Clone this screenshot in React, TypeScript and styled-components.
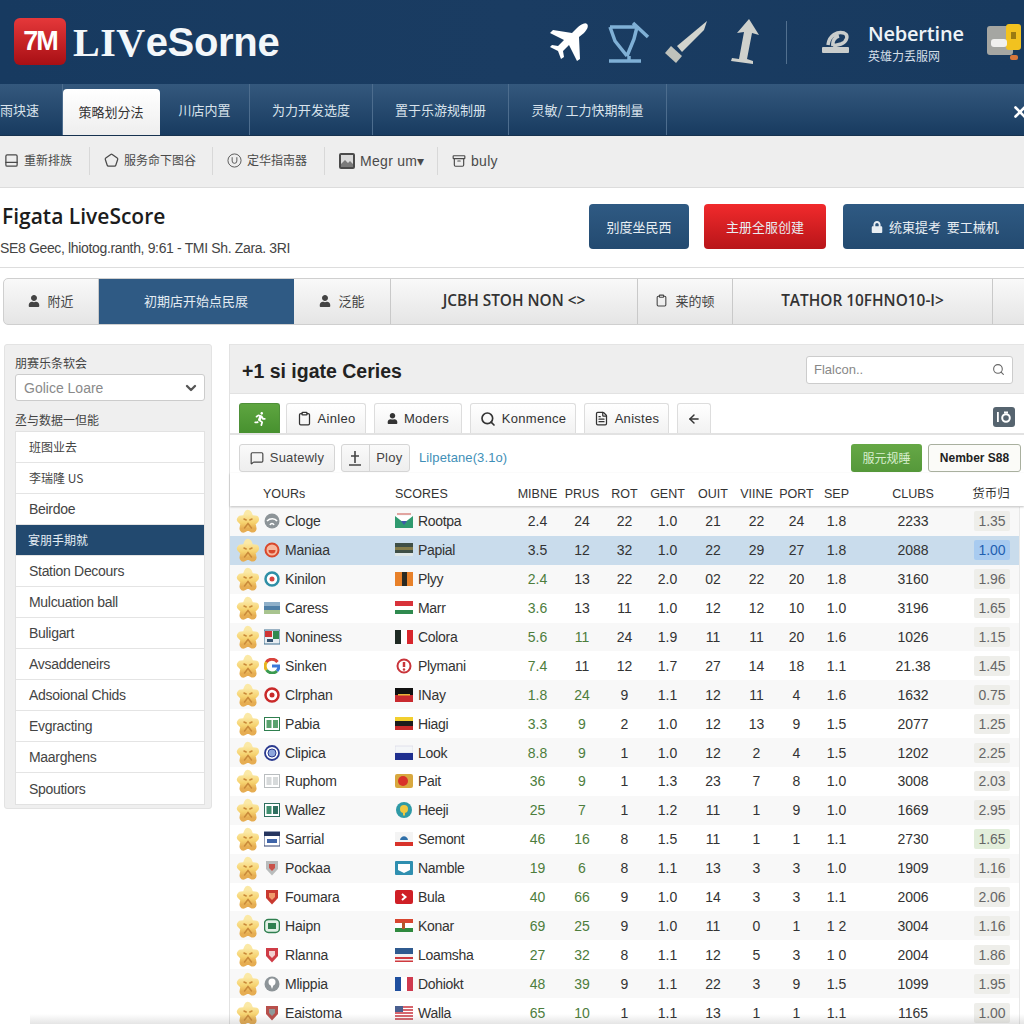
import styled, { createGlobalStyle } from 'styled-components';
import { Archive, ArrowLeft, ChevronDown, Clipboard, FileText, MessageSquare, PanelBottom, Pentagon, Search, X } from 'lucide-react';
import { FaLock, FaRunning, FaUser } from 'react-icons/fa';

const SANS = '"Liberation Sans", Arial, "Noto Sans CJK SC", sans-serif';
const OPEN = '"Open Sans", "Noto Sans", "Noto Sans CJK SC", sans-serif';

const GlobalStyle = createGlobalStyle`
  html, body {
    margin: 0;
    height: 1024px;
    overflow: hidden;
    background: #fff;
    font-family: ${SANS};
  }
  * { box-sizing: border-box; }
`;

const Page = styled.div`
  width: 1024px;
  height: 1024px;
  overflow: hidden;
  position: relative;
`;

const BottomFade = styled.div`
  position: absolute;
  left: 30px;
  right: 0;
  bottom: 0;
  height: 10px;
  background: linear-gradient(rgba(90, 90, 90, 0), rgba(90, 90, 90, 0.16));
  pointer-events: none;
`;

/* top bar */
const TopBar = styled.header`
  height: 84px;
  display: flex;
  align-items: center;
  padding-left: 14px;
  background: linear-gradient(90deg, #173a60, #1a3c62 50%, #183a5f);
`;

const LogoBadge = styled.div`
  width: 52px;
  height: 47px;
  margin-top: -1px;
  border-radius: 6px;
  background: linear-gradient(#e5383a, #a80f14);
  color: #fff;
  font: bold 27px/47px ${SANS};
  letter-spacing: -2px;
  text-align: center;
`;

const LogoText = styled.div`
  margin-left: 7px;
  color: #f3f7fa;
  font: bold 40px/47px ${SANS};
  letter-spacing: -0.3px;
  white-space: nowrap;
`;

const LogoSerif = styled.span`
  font-family: "Liberation Serif", serif;
  letter-spacing: 0.5px;
`;

const TopIcons = styled.div`
  margin-left: auto;
  display: flex;
  align-items: center;
  height: 100%;
`;

const TopIcon = styled.svg<{ $gap?: number }>`
  flex: none;
  margin-left: ${({ $gap }) => $gap || 0}px;
`;

const TopDivider = styled.div`
  width: 1px;
  height: 43px;
  margin: 0 35px 0 26px;
  background: #52708f;
`;

const UserBlock = styled.div`
  margin: 0 21px 0 19px;
  width: 97px;
`;

const UserName = styled.div`
  color: #eef3f7;
  font: 600 20px/26px ${OPEN};
  letter-spacing: -0.2px;
`;

const UserSub = styled.div`
  color: #d5dfe8;
  font: 12px/17px "Noto Sans CJK SC", sans-serif;
`;

const BoxIcon = styled.svg`
  flex: none;
  margin-right: 3px;
`;

/* main navigation */
const NavBar = styled.nav`
  height: 52px;
  display: flex;
  align-items: flex-end;
  background: linear-gradient(#34587d, #183b60);
  border-bottom: 1px solid #16324f;
`;

const NavItem = styled.div<{ $width: number; $active?: boolean; $start?: boolean }>`
  width: ${({ $width }) => $width}px;
  height: ${({ $active }) => ($active ? '46px' : '51px')};
  display: flex;
  align-items: center;
  justify-content: ${({ $start }) => ($start ? 'flex-start' : 'center')};
  border-right: 1px solid ${({ $active }) => ($active ? 'transparent' : '#4d6d8e')};
  border-radius: ${({ $active }) => ($active ? '4px 4px 0 0' : '0')};
  background: ${({ $active }) => ($active ? 'linear-gradient(#fff, #eee)' : 'none')};
  color: ${({ $active }) => ($active ? '#333' : '#d9e3ec')};
  font: 13px/20px "Noto Sans CJK SC", sans-serif;
  white-space: nowrap;
`;

const NavClose = styled.div`
  margin: 0 -5px 14px auto;
  color: #fff;
  display: flex;
`;

/* secondary toolbar */
const SubBar = styled.div`
  height: 52px;
  display: flex;
  align-items: center;
  padding-bottom: 2px;
  background: #eee;
  border-bottom: 1px solid #dcdcdc;
`;

const SubItem = styled.div<{ $width: number }>`
  width: ${({ $width }) => $width}px;
  height: 28px;
  display: flex;
  align-items: center;
  gap: 5px;
  padding-left: 14px;
  border-right: 1px solid #d8d8d8;
  color: #4a4a4a;
  font: 12px/16px ${SANS}, "Noto Sans CJK SC";
  white-space: nowrap;

  &:first-child { padding-left: 4px; }
  &:last-child { border-right: 0; }
`;

const SubLatin = styled.span`
  font-size: 14px;
  letter-spacing: 0.3px;
`;

/* page title */
const TitleRow = styled.section`
  height: 80px;
  display: flex;
  align-items: flex-start;
  border-bottom: 1px solid #ddd;
`;

const TitleBlock = styled.div`
  padding: 14px 0 0 2px;
`;

const PageTitle = styled.h1`
  margin: 0;
  color: #1c1c1c;
  font: 600 21px/28px ${OPEN};
`;

const PageSub = styled.div`
  margin: 8px 0 0 -2px;
  color: #444;
  font: 14px/20px ${SANS};
  letter-spacing: -0.35px;
`;

const TitleActions = styled.div`
  margin-left: auto;
  display: flex;
  gap: 15px;
  padding-top: 16px;
`;

const ActionButton = styled.div<{ $width: number; $red?: boolean; $flush?: boolean }>`
  width: ${({ $width }) => $width}px;
  height: 45px;
  display: flex;
  align-items: center;
  justify-content: ${({ $flush }) => ($flush ? 'flex-start' : 'center')};
  gap: 6px;
  padding-left: ${({ $flush }) => ($flush ? '28px' : '0')};
  margin-left: ${({ $flush }) => ($flush ? '2px' : '0')};
  margin-right: ${({ $flush }) => ($flush ? '-10px' : '0')};
  border-radius: 4px;
  background: ${({ $red }) => ($red ? 'linear-gradient(#f12a2c, #b81519)' : 'linear-gradient(#2f5a83, #234a70)')};
  color: #e8eef3;
  font: 13px/18px "Noto Sans CJK SC", sans-serif;
  white-space: nowrap;
`;

/* wide tab strip */
const TabStrip = styled.div`
  display: flex;
  height: 47px;
  margin: 10px -6px 0 3px;
  border: 1px solid #cfcfcf;
  border-radius: 5px;
  overflow: hidden;
  background: linear-gradient(#f9f9f9, #e5e5e5);
`;

const StripCell = styled.div<{ $width: number; $active?: boolean }>`
  width: ${({ $width }) => $width}px;
  display: flex;
  align-items: center;
  justify-content: center;
  gap: 7px;
  padding-bottom: 2px;
  border-right: 1px solid ${({ $active }) => ($active ? 'transparent' : '#c9c9c9')};
  background: ${({ $active }) => ($active ? '#2f5a84' : 'none')};
  color: ${({ $active }) => ($active ? '#e4ecf3' : '#444')};
  font: 13px/18px "Noto Sans CJK SC", sans-serif;
  white-space: nowrap;
`;

const StripLatin = styled.span`
  color: #333;
  font: 600 15.4px/18px ${OPEN};
`;

/* content area */
const Content = styled.div`
  display: flex;
  align-items: flex-start;
  gap: 17px;
  padding: 19px 0 0 4px;
`;

const Sidebar = styled.aside`
  width: 208px;
  height: 465px;
  flex: none;
  padding: 9px 6px 0 10px;
  background: #efefef;
  border: 1px solid #e3e3e3;
  border-radius: 3px;
`;

const SideLabel = styled.div`
  height: 20px;
  color: #444;
  font: 12px/17px "Noto Sans CJK SC", sans-serif;
`;

const SelectBox = styled.div`
  height: 27px;
  display: flex;
  align-items: center;
  justify-content: space-between;
  margin-bottom: 10px;
  padding: 0 5px 0 8px;
  background: #fff;
  border: 1px solid #ccc;
  border-radius: 3px;
  color: #8a8a8a;
  font: 14px/20px ${SANS};
`;

const SideList = styled.ul`
  list-style: none;
  margin: 0;
  padding: 0;
  background: #fff;
  border: 1px solid #e2e2e2;
`;

const SideItem = styled.li<{ $active?: boolean }>`
  height: 31px;
  display: flex;
  align-items: center;
  padding-left: ${({ $active }) => ($active ? '12px' : '13px')};
  border-bottom: 1px solid #e4e4e4;
  background: ${({ $active }) => ($active ? '#22496f' : 'none')};
  color: ${({ $active }) => ($active ? '#e4ecf3' : '#444')};
  font: 14px/20px ${SANS}, "Noto Sans CJK SC";
  letter-spacing: -0.3px;
  white-space: nowrap;

  &:last-child { border-bottom: 0; }
`;

const SideCjk = styled.span`
  font: 12px/20px "Noto Sans CJK SC", sans-serif;
  letter-spacing: 0;
`;

const Panel = styled.main`
  flex: 1;
  min-width: 0;
  border-left: 1px solid #e2e2e2;
`;

const PanelHead = styled.div`
  height: 50px;
  display: flex;
  align-items: center;
  justify-content: space-between;
  padding: 0 11px 0 12px;
  background: #eee;
  border-top: 1px solid #e4e4e4;
  border-bottom: 1px solid #e2e2e2;
`;

const PanelTitle = styled.h2`
  margin: 3px 0 0;
  color: #222;
  font: bold 19.5px/28px ${SANS};
`;

const SearchBox = styled.div`
  width: 207px;
  height: 28px;
  display: flex;
  align-items: center;
  justify-content: space-between;
  margin-top: 1px;
  padding: 0 7px;
  background: #fff;
  border: 1px solid #ccc;
  border-radius: 3px;
  color: #888;
  font: 13px/18px ${SANS};
`;

const TabRow = styled.div`
  height: 41px;
  display: flex;
  align-items: flex-end;
  gap: 8px;
  padding-left: 9px;
  border-bottom: 2px solid #e2e2e2;
`;

const SmallTab = styled.div<{ $width: number; $green?: boolean; $pull?: boolean }>`
  width: ${({ $width }) => $width}px;
  height: 30px;
  display: flex;
  align-items: center;
  justify-content: center;
  gap: 6px;
  margin-left: ${({ $pull }) => ($pull ? '-2px' : '0')};
  border: 1px solid ${({ $green }) => ($green ? '#4e9038' : '#ddd')};
  border-bottom: 0;
  border-radius: 3px 3px 0 0;
  background: ${({ $green }) => ($green ? 'linear-gradient(#5ea540, #47912f)' : 'linear-gradient(#fff, #f2f2f2)')};
  color: ${({ $green }) => ($green ? '#fff' : '#333')};
  font: 13px/18px ${SANS};
  letter-spacing: 0.3px;
`;

const CameraButton = styled.div`
  width: 22px;
  height: 20px;
  margin: 0 9px 6px auto;
  border-radius: 3px;
  background: #56646f;
  display: flex;
  align-items: center;
  justify-content: center;
`;

const ToolRow = styled.div`
  height: 38px;
  display: flex;
  align-items: flex-end;
  gap: 6px;
  padding: 0 3px 1px 9px;
`;

const ToolButton = styled.div<{ $width: number; $joined?: boolean }>`
  width: ${({ $width }) => $width}px;
  height: 28px;
  display: flex;
  align-items: center;
  justify-content: center;
  gap: ${({ $joined }) => ($joined ? '0' : '6px')};
  background: linear-gradient(#fafafa, #eee);
  border: 1px solid #d5d5d5;
  border-radius: 3px;
  color: #444;
  font: 13px/18px ${SANS};
  letter-spacing: 0.2px;
`;

const ToolPart = styled.div<{ $width: number; $split?: boolean }>`
  width: ${({ $width }) => $width}px;
  height: 100%;
  display: flex;
  align-items: center;
  justify-content: center;
  border-right: ${({ $split }) => ($split ? '1px solid #d5d5d5' : '0')};
`;

const ToolLink = styled.a`
  margin: 0 0 5px 3px;
  color: #3f8fb8;
  font: 13px/18px ${SANS};
  letter-spacing: 0.1px;
`;

const GreenButton = styled.div`
  width: 71px;
  height: 28px;
  margin-left: auto;
  display: flex;
  align-items: center;
  justify-content: center;
  border-radius: 3px;
  background: linear-gradient(#66a846, #55983a);
  color: #d9efcf;
  font: 12px/16px "Noto Sans CJK SC", sans-serif;
`;

const OutlineButton = styled.div`
  width: 93px;
  height: 28px;
  display: flex;
  align-items: center;
  justify-content: center;
  border: 1px solid #a9b09f;
  border-radius: 3px;
  background: #fbfbf8;
  color: #222;
  font: bold 12px/16px ${SANS};
`;

const COLUMNS = '159px 123px 45px 44px 41px 45px 46px 41px 39px 41px 112px 44px';

const HeadRow = styled.div`
  height: 33px;
  display: grid;
  grid-template-columns: ${COLUMNS};
  align-items: center;
  padding: 8px 0 0 3px;
  box-shadow: 0 1px 2px rgba(0, 0, 0, 0.25);
  color: #333;
  font: 12.5px/16px ${SANS}, "Noto Sans CJK SC";
  position: relative;
`;

const HeadCell = styled.div<{ $left?: boolean; $pad?: number }>`
  text-align: ${({ $left }) => ($left ? 'left' : 'center')};
  padding-left: ${({ $pad }) => $pad || 0}px;
  white-space: nowrap;
`;

const Rows = styled.div`
  display: flex;
  flex-direction: column;
  margin: 1px 4px 0 0;
  border-right: 1px solid #e8e8e8;
`;

const TableRow = styled.div<{ $selected?: boolean; $odd?: boolean }>`
  height: 28.9px;
  flex: none;
  display: grid;
  grid-template-columns: ${COLUMNS};
  align-items: center;
  padding-left: 3px;
  background: ${({ $selected, $odd }) => ($selected ? '#c9dcec' : $odd ? '#f8f8f8' : '#fff')};
  color: #333;
  font: 14px/18px ${SANS};
`;

const NameCell = styled.div`
  display: flex;
  align-items: center;
  padding-left: 3px;
  white-space: nowrap;
  letter-spacing: -0.2px;
`;

const NameLogo = styled.span`
  display: flex;
  margin: 0 5px 0 4px;
`;

const TeamCell = styled(NameCell)`
  gap: 5px;
  letter-spacing: -0.3px;
`;

const Num = styled.div<{ $green?: boolean }>`
  text-align: center;
  color: ${({ $green }) => ($green ? '#4d7d3c' : '#333')};
`;

const OddsBadge = styled.div<{ $tone: 'plain' | 'blue' | 'green' }>`
  height: 20px;
  margin: 0 3px 0 5px;
  text-align: center;
  line-height: 20px;
  border-radius: 2px;
  background: ${({ $tone }) => ({ plain: '#eeeeea', blue: '#a8cbf0', green: '#e2eedb' })[$tone]};
  color: ${({ $tone }) => ($tone === 'blue' ? '#1f5fb0' : '#666')};
`;

const Star = () => (
  <svg width="24" height="26" viewBox="0 0 24 26">
    <defs>
      <linearGradient id="starFill" x1="0" y1="0" x2="0" y2="1">
        <stop offset="0" stopColor="#fbe9a6" />
        <stop offset="0.6" stopColor="#f6d26e" />
        <stop offset="1" stopColor="#e6ad52" />
      </linearGradient>
    </defs>
    <path
      d="M12 6l2 5 5 .500-3.500 3.500 1 5.500-4.500-2.500-4.500 2.500 1-5.500L5 11.500l5-.500z"
      fill="url(#starFill)"
      stroke="url(#starFill)"
      strokeWidth="8"
      strokeLinejoin="round"
    />
    <path d="M8 11l2.200 1M16 11l-2.200 1M8.500 20l3.500-4.500 3.500 4.500" fill="none" stroke="#c98a3a" strokeWidth="1.500" strokeLinecap="round" />
  </svg>
);

const ring = (color: string, inner: string) => (
  <>
    <circle cx="8" cy="8" r="6.500" fill="#fff" stroke={color} strokeWidth="2.500" />
    <circle cx="8" cy="8" r="2.500" fill={inner} />
  </>
);

const box = (frame: string, a: string, b: string) => (
  <>
    <rect x="0.500" y="1.500" width="15" height="13" fill="#fff" stroke={frame} />
    <rect x="2.500" y="4" width="5" height="8" fill={a} />
    <rect x="9" y="4" width="5" height="8" fill={b} />
  </>
);

const shield = (a: string, b: string) => (
  <>
    <path d="M2 1h12v8l-6 6.500L2 9z" fill={a} />
    <path d="M5 4h6v4l-3 3-3-3z" fill={b} />
  </>
);

const CRESTS: Record<string, React.ReactNode> = {
  Cloge: (
    <>
      <circle cx="8" cy="8" r="7.500" fill="#8d9498" />
      <path d="M3 8c3-3 8-3 10 0M6 12c1-2 3-2 4 0" fill="none" stroke="#fff" strokeWidth="1.600" />
    </>
  ),
  Maniaa: (
    <>
      <circle cx="8" cy="8" r="6.500" fill="#f6b9a0" stroke="#d9472b" strokeWidth="2" />
      <path d="M4.500 8a3.500 3.500 0 0 0 7 0z" fill="#d9472b" />
    </>
  ),
  Kinilon: ring('#2f8fa6', '#d8433c'),
  Caress: (
    <>
      <rect y="2" width="16" height="4" fill="#8fb0c9" />
      <rect y="6" width="16" height="4" fill="#4f7fa6" />
      <rect y="10" width="16" height="4" fill="#a8c48f" />
    </>
  ),
  Noniness: (
    <>
      <rect y="1" width="16" height="14" fill="#e8eef2" stroke="#3f6f8f" />
      <rect x="1" y="2" width="7" height="6" fill="#cf3434" />
      <rect x="9" y="2" width="6" height="8" fill="#2f8a4f" />
      <rect x="3" y="10" width="6" height="3" fill="#35526f" />
    </>
  ),
  Sinken: (
    <>
      <path d="M13.500 4A7 7 0 0 0 2 4.500" fill="none" stroke="#d8433c" strokeWidth="3" />
      <path d="M2.500 4A7 7 0 0 0 2.500 12" fill="none" stroke="#e8b51f" strokeWidth="3" />
      <path d="M2.500 12A7 7 0 0 0 13 13" fill="none" stroke="#3a9a4f" strokeWidth="3" />
      <path d="M8 8h7a7 7 0 0 1-2 5" fill="none" stroke="#3c78d8" strokeWidth="3" />
    </>
  ),
  Clrphan: ring('#c92a2a', '#c92a2a'),
  Pabia: box('#2f7f4f', '#5aa36f', '#5aa36f'),
  Clipica: (
    <>
      <circle cx="8" cy="8" r="7" fill="#fff" stroke="#2b3a8f" strokeWidth="1.800" />
      <circle cx="8" cy="8" r="4" fill="#8ea6dc" stroke="#2b3a8f" />
    </>
  ),
  Ruphom: box('#b9bdbf', '#d7dadb', '#d7dadb'),
  Wallez: box('#2f6f5f', '#3f8f6f', '#2f6f5f'),
  Sarrial: (
    <>
      <rect y="1" width="16" height="14" fill="#fff" stroke="#2c3e6f" />
      <rect y="1" width="16" height="4" fill="#26355f" />
      <rect x="3" y="8" width="10" height="4" fill="#3f64a8" />
    </>
  ),
  Pockaa: shield('#b9bcbc', '#c9524a'),
  Foumara: shield('#c9392f', '#f09a6a'),
  Haipn: (
    <>
      <rect x="0.500" y="1.500" width="15" height="13" rx="4" fill="#e2f0e6" stroke="#2f7f4f" strokeWidth="1.500" />
      <rect x="4" y="5" width="8" height="6" fill="#2f7f4f" />
    </>
  ),
  Rlanna: shield('#cf3c46', '#f2d0d0'),
  Mlippia: (
    <>
      <circle cx="8" cy="8" r="7.500" fill="#8d9498" />
      <circle cx="8" cy="6" r="3.500" fill="#fff" />
      <path d="M6.500 9h3L8 13z" fill="#fff" />
    </>
  ),
  Eaistoma: shield('#b8504c', '#8f9a9a'),
};

const FLAGS: Record<string, React.ReactNode> = {
  Rootpa: (
    <>
      <rect y="3" width="18" height="12" fill="#2f9a6f" />
      <path d="M0 3l9 7 9-7z" fill="#fff" />
      <path d="M6 8h6l-3 4z" fill="#3c5aa8" />
      <rect x="2" y="0.500" width="14" height="1" fill="#c9524a" />
    </>
  ),
  Papial: (
    <>
      <rect width="18" height="12" y="1" fill="#3f4f46" />
      <rect y="5" width="18" height="3" fill="#b39a4a" opacity="0.6" />
      <rect y="11" width="18" height="3" fill="#dfe6e6" />
    </>
  ),
  Plyy: (
    <>
      <rect y="1" width="18" height="14" fill="#e8812a" />
      <rect x="7" y="1" width="5" height="14" fill="#2a2a22" />
    </>
  ),
  Marr: (
    <>
      <rect y="1" width="18" height="5" fill="#d8323a" />
      <rect y="6" width="18" height="4" fill="#fff" />
      <rect y="10" width="18" height="4" fill="#2f8a4f" />
    </>
  ),
  Colora: (
    <>
      <rect y="1" width="6" height="14" fill="#1f2a24" />
      <rect x="6" y="1" width="6" height="14" fill="#fff" />
      <rect x="12" y="1" width="6" height="14" fill="#d8262c" />
    </>
  ),
  Plymani: (
    <>
      <circle cx="9" cy="8" r="6.500" fill="#fff" stroke="#c9343a" strokeWidth="2" />
      <path d="M9 4v5" stroke="#c9343a" strokeWidth="2.500" />
      <circle cx="9" cy="11.500" r="1.200" fill="#c9343a" />
    </>
  ),
  INay: (
    <>
      <rect y="1" width="18" height="7" fill="#111" />
      <rect y="8" width="18" height="7" fill="#c92a2f" />
      <rect x="3" y="7" width="12" height="1.500" fill="#e8b13a" />
    </>
  ),
  Hiagi: (
    <>
      <rect y="1" width="18" height="4" fill="#f2cf2f" />
      <rect y="5" width="18" height="5" fill="#1c1c1c" />
      <rect y="10" width="18" height="4" fill="#c92a2a" />
    </>
  ),
  Look: (
    <>
      <rect y="1" width="18" height="7" fill="#f4f6f8" stroke="#ccd" strokeWidth="0.500" />
      <rect y="8" width="18" height="7" fill="#1f2f8f" />
    </>
  ),
  Pait: (
    <>
      <rect y="1" width="18" height="14" rx="2" fill="#d8a83f" />
      <circle cx="8" cy="8" r="5" fill="#d8322a" />
    </>
  ),
  Heeji: (
    <>
      <circle cx="9" cy="8" r="8" fill="#2f9aa6" />
      <circle cx="9" cy="7" r="4" fill="#f0c83f" />
      <rect x="8" y="10" width="2" height="3.500" fill="#f0c83f" />
    </>
  ),
  Semont: (
    <>
      <rect y="1" width="18" height="14" fill="#f4f4f4" />
      <rect y="11" width="18" height="4" fill="#d8322a" />
      <path d="M5 9c1-5 7-5 8 0z" fill="#2f6fa8" />
    </>
  ),
  Namble: (
    <>
      <rect y="1" width="18" height="14" rx="1" fill="#2f8fb0" />
      <path d="M3 4h12v6l-6 3-6-3z" fill="#fff" />
    </>
  ),
  Bula: (
    <>
      <rect y="1" width="18" height="14" rx="2" fill="#cf1f26" />
      <path d="M7 5l3.500 3L7 11" fill="none" stroke="#fff" strokeWidth="2" />
    </>
  ),
  Konar: (
    <>
      <rect y="1" width="18" height="4" fill="#d8452f" />
      <rect y="5" width="18" height="5" fill="#fff" />
      <rect y="10" width="18" height="4" fill="#2f8a3f" />
      <rect x="7" y="4" width="3" height="7" fill="#b5562a" />
    </>
  ),
  Loamsha: (
    <>
      <rect y="1" width="18" height="6" fill="#2f5a8f" />
      <rect y="7" width="18" height="3" fill="#f2f2f2" />
      <rect y="10" width="18" height="2" fill="#cf3a3f" />
      <rect y="12" width="18" height="1.500" fill="#f2f2f2" />
      <rect y="13.500" width="18" height="1.500" fill="#cf3a3f" />
    </>
  ),
  Dohiokt: (
    <>
      <rect y="1" width="6" height="14" fill="#1f4f9f" />
      <rect x="6" y="1" width="6" height="14" fill="#fff" />
      <rect x="12" y="1" width="6" height="14" fill="#cf3a4f" />
    </>
  ),
  Walla: (
    <>
      <rect y="1" width="18" height="14" fill="#fff" />
      <path d="M0 2h18M0 5h18M0 8h18M0 11h18M0 14h18" stroke="#c9343f" strokeWidth="1.500" />
      <rect y="1" width="8" height="6" fill="#4a5f8f" />
    </>
  ),
};

const Crest = ({ name }: { name: string }) => (
  <svg width="16" height="16" viewBox="0 0 16 16">{CRESTS[name]}</svg>
);

const Flag = ({ name }: { name: string }) => (
  <svg width="18" height="16" viewBox="0 0 18 16">{FLAGS[name]}</svg>
);

type Row = [string, string, string, string, string, string, string, string, string, string, string, string];

const ROWS: Row[] = [
  ['Cloge', 'Rootpa', '2.4', '24', '22', '1.0', '21', '22', '24', '1.8', '2233', '1.35'],
  ['Maniaa', 'Papial', '3.5', '12', '32', '1.0', '22', '29', '27', '1.8', '2088', '1.00'],
  ['Kinilon', 'Plyy', '2.4', '13', '22', '2.0', '02', '22', '20', '1.8', '3160', '1.96'],
  ['Caress', 'Marr', '3.6', '13', '11', '1.0', '12', '12', '10', '1.0', '3196', '1.65'],
  ['Noniness', 'Colora', '5.6', '11', '24', '1.9', '11', '11', '20', '1.6', '1026', '1.15'],
  ['Sinken', 'Plymani', '7.4', '11', '12', '1.7', '27', '14', '18', '1.1', '21.38', '1.45'],
  ['Clrphan', 'INay', '1.8', '24', '9', '1.1', '12', '11', '4', '1.6', '1632', '0.75'],
  ['Pabia', 'Hiagi', '3.3', '9', '2', '1.0', '12', '13', '9', '1.5', '2077', '1.25'],
  ['Clipica', 'Look', '8.8', '9', '1', '1.0', '12', '2', '4', '1.5', '1202', '2.25'],
  ['Ruphom', 'Pait', '36', '9', '1', '1.3', '23', '7', '8', '1.0', '3008', '2.03'],
  ['Wallez', 'Heeji', '25', '7', '1', '1.2', '11', '1', '9', '1.0', '1669', '2.95'],
  ['Sarrial', 'Semont', '46', '16', '8', '1.5', '11', '1', '1', '1.1', '2730', '1.65'],
  ['Pockaa', 'Namble', '19', '6', '8', '1.1', '13', '3', '3', '1.0', '1909', '1.16'],
  ['Foumara', 'Bula', '40', '66', '9', '1.0', '14', '3', '3', '1.1', '2006', '2.06'],
  ['Haipn', 'Konar', '69', '25', '9', '1.0', '11', '0', '1', '1 2', '3004', '1.16'],
  ['Rlanna', 'Loamsha', '27', '32', '8', '1.1', '12', '5', '3', '1 0', '2004', '1.86'],
  ['Mlippia', 'Dohiokt', '48', '39', '9', '1.1', '22', '3', '9', '1.5', '1099', '1.95'],
  ['Eaistoma', 'Walla', '65', '10', '1', '1.1', '13', '1', '1', '1.1', '1165', '1.00'],
];

const HEAD = ['MIBNE', 'PRUS', 'ROT', 'GENT', 'OUIT', 'VIINE', 'PORT', 'SEP', 'CLUBS', '货币归'];

const SIDE_ITEMS = [
  { label: '班图业去', cjk: true },
  { label: '李瑞隆 US', cjk: true },
  { label: 'Beirdoe' },
  { label: '宴朋手期就', cjk: true, active: true },
  { label: 'Station Decours' },
  { label: 'Mulcuation ball' },
  { label: 'Buligart' },
  { label: 'Avsaddeneirs' },
  { label: 'Adsoional Chids' },
  { label: 'Evgracting' },
  { label: 'Maarghens' },
  { label: 'Spoutiors' },
];

const App = () => (
  <Page>
    <GlobalStyle />
    <TopBar>
      <LogoBadge>7M</LogoBadge>
      <LogoText>
        <LogoSerif>LIV</LogoSerif>eSorne
      </LogoText>
      <TopIcons>
        <TopIcon width="40" height="40" viewBox="0 0 40 40">
          <path d="M38 2c2 2 0 6-3 9l-5 4 1 22-3 2-8-16-6 6 1 6-3 2-3-8-8-4 2-2 6 1 6-6L1 11l3-3 19 3 5-5c3-3 8-6 10-4z" fill="#fff" />
        </TopIcon>
        <TopIcon $gap={18} width="44" height="44" viewBox="0 0 44 44">
          <path d="M3 7h27M3 7l5 14 12 15M30 7l-3 12-7 17M2 41h32M22 36v5M26 3l15 14" fill="none" stroke="#7fb0d6" strokeWidth="3.500" />
        </TopIcon>
        <TopIcon $gap={13} width="44" height="44" viewBox="0 0 44 44">
          <path d="M43 1L13 26l5 6 22-22z" fill="#d2d4ce" />
          <path d="M7 26l11 10-6 7-11-10z" fill="#bfc2bc" />
        </TopIcon>
        <TopIcon $gap={22} width="30" height="46" viewBox="0 0 30 46">
          <path d="M19 0l10 16-7-2-5 26 6 2v3L1 42l1-3 7 1 5-27-7 1z" fill="#cfd1cc" />
        </TopIcon>
        <TopDivider />
        <svg width="27" height="24" viewBox="0 0 27 24">
          <path d="M6 15C7 5 16 1 22 3c5 2 3 9-3 11l-8 2M11 16c-1-5 2-9 6-10" fill="none" stroke="#c9cdcc" strokeWidth="3.500" />
          <rect y="17" width="27" height="6" rx="1" fill="#c9cdcc" />
        </svg>
        <UserBlock>
          <UserName>Nebertine</UserName>
          <UserSub>英雄力丢服网</UserSub>
        </UserBlock>
        <BoxIcon width="35" height="38" viewBox="0 0 35 38">
          <rect x="1" y="3" width="26" height="29" rx="3" fill="#a5a6a2" />
          <rect x="20" y="1" width="15" height="26" rx="3" fill="#f2c21f" />
          <rect x="5" y="16" width="16" height="8" rx="3" fill="#f0f0ee" />
          <rect x="25" y="9" width="5" height="7" fill="#9a7a12" />
          <rect x="24" y="32" width="8" height="5" rx="2" fill="#d8763a" />
        </BoxIcon>
      </TopIcons>
    </TopBar>

    <NavBar>
      <NavItem $width={63} $start>雨块速</NavItem>
      <NavItem $width={97} $active>策略划分法</NavItem>
      <NavItem $width={90}>川店内置</NavItem>
      <NavItem $width={123}>为力开发选度</NavItem>
      <NavItem $width={136}>置于乐游规制册</NavItem>
      <NavItem $width={158}>灵敏/ 工力快期制量</NavItem>
      <NavClose>
        <X size={18} strokeWidth={3.500} />
      </NavClose>
    </NavBar>

    <SubBar>
      <SubItem $width={90}>
        <PanelBottom size={15} />
        重新排族
      </SubItem>
      <SubItem $width={123}>
        <Pentagon size={15} />
        服务命下图谷
      </SubItem>
      <SubItem $width={112}>
        <svg width="15" height="15" viewBox="0 0 16 16">
          <circle cx="8" cy="8" r="7" fill="none" stroke="#555" />
          <path d="M5.500 4.500v4a2.500 2.500 0 0 0 5 0v-4" fill="none" stroke="#555" />
        </svg>
        定华指南器
      </SubItem>
      <SubItem $width={113}>
        <svg width="16" height="16" viewBox="0 0 16 16">
          <rect width="16" height="16" rx="2" fill="#4a4a4a" />
          <rect x="2" y="2" width="12" height="9" fill="#d9d9d9" />
          <path d="M2 11l4-4 3 3 2-2 3 3v3H2z" fill="#7a7a7a" />
        </svg>
        <SubLatin>Megr um▾</SubLatin>
      </SubItem>
      <SubItem $width={100}>
        <Archive size={14} />
        <SubLatin>buly</SubLatin>
      </SubItem>
    </SubBar>

    <TitleRow>
      <TitleBlock>
        <PageTitle>Figata LiveScore</PageTitle>
        <PageSub>SE8 Geec, lhiotog.ranth, 9:61 - TMI Sh. Zara. 3RI</PageSub>
      </TitleBlock>
      <TitleActions>
        <ActionButton $width={100}>别度坐民西</ActionButton>
        <ActionButton $width={122} $red>主册全服创建</ActionButton>
        <ActionButton $width={191} $flush>
          <FaLock size={12} />
          统東提考&nbsp;&nbsp;要工械机
        </ActionButton>
      </TitleActions>
    </TitleRow>

    <TabStrip>
      <StripCell $width={95}>
        <FaUser size={12} />
        附近
      </StripCell>
      <StripCell $width={195} $active>
        初期店开始点民展
      </StripCell>
      <StripCell $width={97}>
        <FaUser size={12} />
        泛能
      </StripCell>
      <StripCell $width={247}>
        <StripLatin>JCBH STOH NON &lt;&gt;</StripLatin>
      </StripCell>
      <StripCell $width={95}>
        <Clipboard size={13} />
        莱的顿
      </StripCell>
      <StripCell $width={260}>
        <StripLatin>TATHOR 10FHNO10-I&gt;</StripLatin>
      </StripCell>
    </TabStrip>

    <Content>
      <Sidebar>
        <SideLabel>朋赛乐条软会</SideLabel>
        <SelectBox>
          Golice Loare
          <ChevronDown size={16} strokeWidth={3.500} color="#555" />
        </SelectBox>
        <SideLabel>丞与数据一但能</SideLabel>
        <SideList>
          {SIDE_ITEMS.map((item) => (
            <SideItem key={item.label} $active={item.active}>
              {item.cjk ? <SideCjk>{item.label}</SideCjk> : item.label}
            </SideItem>
          ))}
        </SideList>
      </Sidebar>

      <Panel>
        <PanelHead>
          <PanelTitle>+1 si igate Ceries</PanelTitle>
          <SearchBox>
            Flalcon..
            <Search size={13} color="#666" />
          </SearchBox>
        </PanelHead>

        <TabRow>
          <SmallTab $width={41} $green>
            <FaRunning size={14} />
          </SmallTab>
          <SmallTab $width={80} $pull>
            <Clipboard size={15} />
            Ainleo
          </SmallTab>
          <SmallTab $width={88}>
            <FaUser size={11} />
            Moders
          </SmallTab>
          <SmallTab $width={106}>
            <Search size={16} strokeWidth={2.500} />
            Konmence
          </SmallTab>
          <SmallTab $width={85}>
            <FileText size={15} />
            Anistes
          </SmallTab>
          <SmallTab $width={34}>
            <ArrowLeft size={14} strokeWidth={2.500} />
          </SmallTab>
          <CameraButton>
            <svg width="16" height="12" viewBox="0 0 16 12">
              <rect x="1" y="1" width="1.800" height="10" fill="#fff" />
              <circle cx="10" cy="7" r="3.800" fill="none" stroke="#fff" strokeWidth="2" />
              <rect x="8" y="0.500" width="4" height="2" fill="#fff" />
            </svg>
          </CameraButton>
        </TabRow>

        <ToolRow>
          <ToolButton $width={96}>
            <MessageSquare size={14} />
            Suatewly
          </ToolButton>
          <ToolButton $width={69} $joined>
            <ToolPart $width={28} $split>
              <svg width="12" height="15" viewBox="0 0 12 15">
                <path d="M6 0v12M2 5h8M0 14h12" fill="none" stroke="#444" strokeWidth="1.600" />
              </svg>
            </ToolPart>
            <ToolPart $width={40}>Ploy</ToolPart>
          </ToolButton>
          <ToolLink>Lilpetane(3.1o)</ToolLink>
          <GreenButton>服元规睡</GreenButton>
          <OutlineButton>Nember S88</OutlineButton>
        </ToolRow>

        <HeadRow>
          <HeadCell $left $pad={30}>YOURs</HeadCell>
          <HeadCell $left $pad={3}>SCORES</HeadCell>
          {HEAD.map((label) => (
            <HeadCell key={label}>{label}</HeadCell>
          ))}
        </HeadRow>

        <Rows>
          {ROWS.map((row, i) => {
            const [name, team, a, b, ...rest] = row;
            const clubs = rest[rest.length - 2];
            const odds = rest[rest.length - 1];
            const tone = i === 1 ? 'blue' : i === 11 ? 'green' : 'plain';
            return (
              <TableRow key={name} $selected={i === 1} $odd={i % 2 === 0}>
                <NameCell>
                  <Star />
                  <NameLogo>
                    <Crest name={name} />
                  </NameLogo>
                  {name}
                </NameCell>
                <TeamCell>
                  <Flag name={team} />
                  {team}
                </TeamCell>
                <Num $green={i >= 2}>{a}</Num>
                <Num $green={i === 4 || i >= 6}>{b}</Num>
                {rest.slice(0, -2).map((value, k) => (
                  <Num key={k}>{value}</Num>
                ))}
                <Num>{clubs}</Num>
                <OddsBadge $tone={tone}>{odds}</OddsBadge>
              </TableRow>
            );
          })}
        </Rows>
      </Panel>
    </Content>
    <BottomFade />
  </Page>
);

export default App;
